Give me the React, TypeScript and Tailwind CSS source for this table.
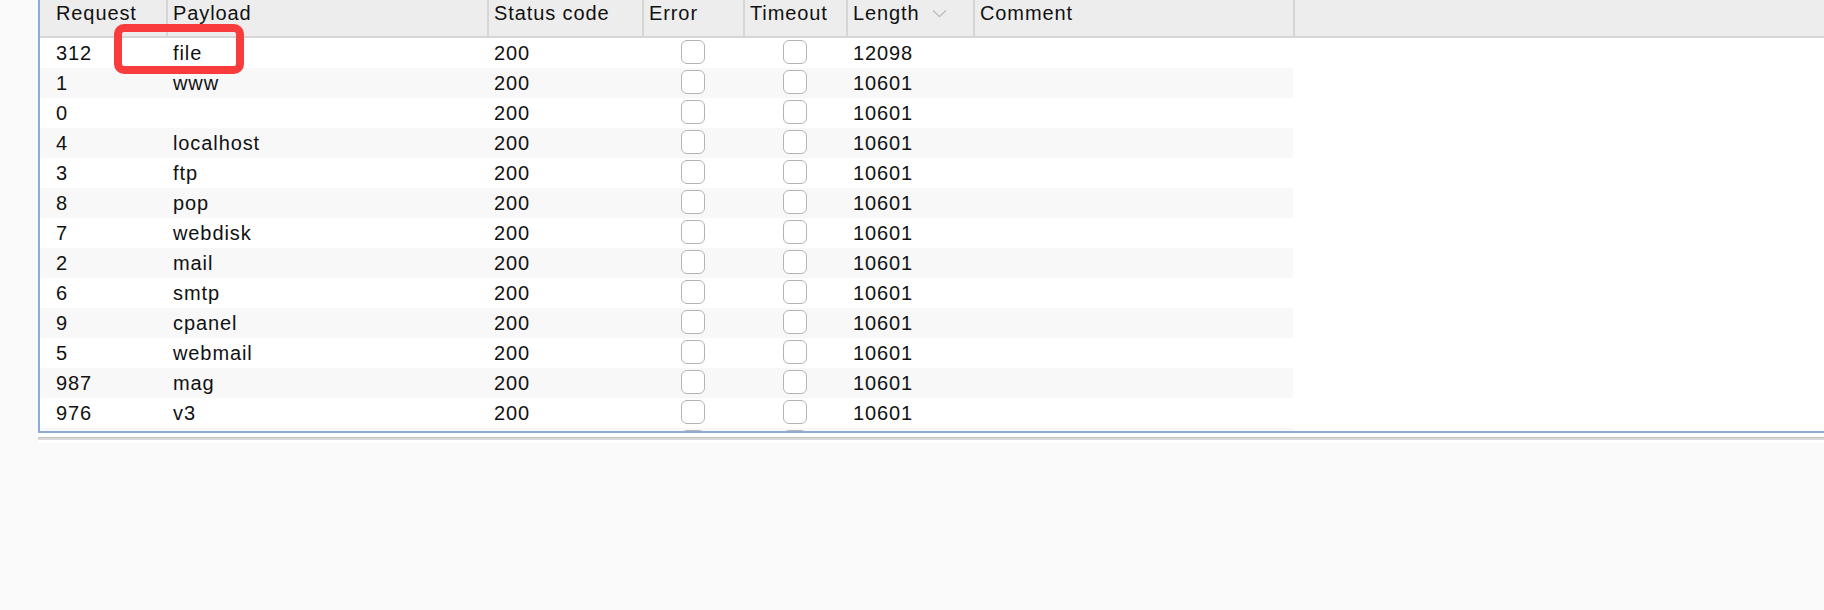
import React from 'react';

type Row = {
  request: string;
  payload: string;
  status: string;
  length: string;
};

const rows: Row[] = [
  { request: '312', payload: 'file', status: '200', length: '12098' },
  { request: '1', payload: 'www', status: '200', length: '10601' },
  { request: '0', payload: '', status: '200', length: '10601' },
  { request: '4', payload: 'localhost', status: '200', length: '10601' },
  { request: '3', payload: 'ftp', status: '200', length: '10601' },
  { request: '8', payload: 'pop', status: '200', length: '10601' },
  { request: '7', payload: 'webdisk', status: '200', length: '10601' },
  { request: '2', payload: 'mail', status: '200', length: '10601' },
  { request: '6', payload: 'smtp', status: '200', length: '10601' },
  { request: '9', payload: 'cpanel', status: '200', length: '10601' },
  { request: '5', payload: 'webmail', status: '200', length: '10601' },
  { request: '987', payload: 'mag', status: '200', length: '10601' },
  { request: '976', payload: 'v3', status: '200', length: '10601' },
  // next row is scrolled out of view, only the checkbox tops peek in
  { request: '', payload: '', status: '', length: '' },
];

const cols = 'grid grid-cols-[126px_321px_155px_101px_103px_127px_320px]';

const Checkbox = () => (
  <div className="w-[24px] h-[24px] rounded-[6px] border-[1.5px] border-[#b4b4b4] bg-white" />
);

const Chevron = () => (
  <svg width="15" height="9" viewBox="0 0 15 9" className="ml-[12px]">
    <path d="M1 1.5 L7.5 7.5 L14 1.5" fill="none" stroke="#bdbdbd" strokeWidth="1.3" />
  </svg>
);

export default function App() {
  const head = 'border-l-2 border-[#d6d6d6] pl-[5px] flex items-start';

  return (
    <div
      className="w-[1824px] h-[610px] bg-[#fafafa] overflow-hidden text-[20px] tracking-[0.9px] text-[#111]"
      style={{ fontFamily: '"Liberation Sans", Arial, sans-serif' }}
    >
      {/* results table */}
      <div className="relative ml-[38px] h-[433px] border-l-2 border-b-2 border-[#8eabd8] bg-white overflow-hidden">
        <div className="flex h-[38px] bg-[#ededed] border-b-2 border-[#d6d6d6] leading-[26px]">
          <div className={cols}>
            <div className="pl-[16px]">Request</div>
            <div className={head}>Payload</div>
            <div className={head}>Status code</div>
            <div className={head}>Error</div>
            <div className={head}>Timeout</div>
            <div className={head}>
              Length
              <span className="h-[26px] flex items-center">
                <Chevron />
              </span>
            </div>
            <div className={head}>Comment</div>
          </div>
          <div className="flex-1 border-l-2 border-[#d6d6d6]" />
        </div>

        <div className="leading-[30px]">
          {rows.map((r, i) => (
            <div
              key={i}
              className={`${cols} w-[1253px] h-[30px] ${i % 2 === 1 ? 'bg-[#f8f8f8]' : 'bg-white'}`}
            >
              <div className="pl-[16px]">{r.request}</div>
              <div className="border-l-2 border-transparent pl-[5px]">{r.payload}</div>
              <div className="border-l-2 border-transparent pl-[5px]">{r.status}</div>
              <div className="border-l-2 border-transparent flex justify-center pt-[2px] pr-[2px]">
                <Checkbox />
              </div>
              <div className="border-l-2 border-transparent flex justify-center pt-[2px] pr-[2px]">
                <Checkbox />
              </div>
              <div className="border-l-2 border-transparent pl-[5px]">{r.length}</div>
              <div className="border-l-2 border-transparent" />
            </div>
          ))}
        </div>

        {/* highlight box */}
        <div className="absolute left-[74px] top-[24px] w-[130px] h-[50px] rounded-[10px] border-[8px] border-[#f83c3c]" />
      </div>

      {/* split divider */}
      <div className="ml-[38px] h-[10px] bg-white flex flex-col justify-center">
        <div className="h-[1px] bg-[#c4c4c4]" />
        <div className="h-[2px] bg-[#d9d9d9]" />
      </div>
    </div>
  );
}
